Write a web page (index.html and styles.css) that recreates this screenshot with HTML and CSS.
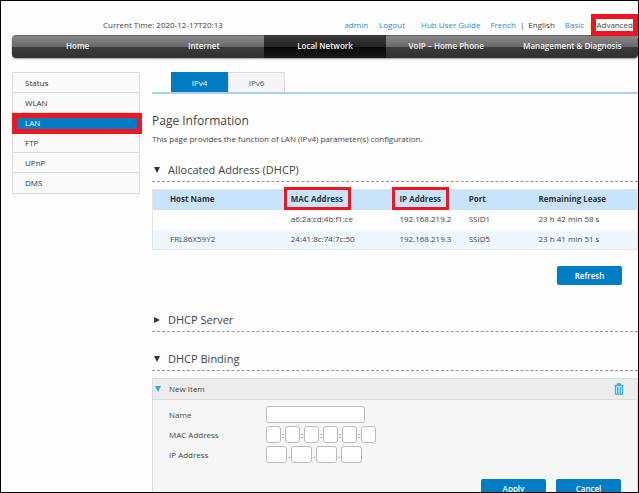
FILE: index.html
```html
<!DOCTYPE html>
<html lang="en">
<head>
    <meta charset="UTF-8">
    <title>Local Network - LAN</title>
    <link rel="stylesheet" href="styles.css">
</head>
<body>

    <header class="topbar">
        <span class="time">Current Time: 2020-12-17T20:13</span>
        <div class="links">
            <a href="#">admin</a>
            <a href="#" class="logout">Logout</a>
            <a href="#" class="guide">Hub User Guide</a>
            <span class="lang"><a href="#">French</a><i>|</i><span>English</span></span>
            <span class="mode"><a href="#">Basic</a><i>|</i></span>
            <span class="advanced marked">Advanced</span>
        </div>
    </header>

    <nav class="main-nav">
        <a href="#">Home</a>
        <a href="#">Internet</a>
        <a href="#" class="active">Local Network</a>
        <a href="#">VoIP – Home Phone</a>
        <a href="#">Management &amp; Diagnosis</a>
    </nav>

    <div class="content">
        <nav class="side-nav">
            <a href="#">Status</a>
            <a href="#">WLAN</a>
            <a href="#" class="active marked">LAN</a>
            <a href="#">FTP</a>
            <a href="#">UPnP</a>
            <a href="#">DMS</a>
        </nav>

        <main>
            <div class="tabs">
                <button type="button" class="active">IPv4</button>
                <button type="button">IPv6</button>
            </div>

            <h1>Page Information</h1>
            <p class="intro">This page provides the function of LAN (IPv4) parameter(s) configuration.</p>

            <section class="allocated">
                <h2><svg class="arrow" viewBox="0 0 6 6"><path d="M0 0h6L3 6z"/></svg>Allocated Address (DHCP)</h2>
                <table>
                    <thead>
                        <tr>
                            <th class="host">Host Name</th>
                            <th class="mac"><span class="marked">MAC Address</span></th>
                            <th class="ip"><span class="marked">IP Address</span></th>
                            <th class="port">Port</th>
                            <th>Remaining Lease</th>
                        </tr>
                    </thead>
                    <tbody>
                        <tr>
                            <td></td>
                            <td>a6:2a:cd:4b:f1:ce</td>
                            <td>192.168.219.2</td>
                            <td>SSID1</td>
                            <td>23 h 42 min 58 s</td>
                        </tr>
                        <tr>
                            <td>FRL86X59Y2</td>
                            <td>24:41:8c:74:7c:50</td>
                            <td>192.168.219.3</td>
                            <td>SSID5</td>
                            <td>23 h 41 min 51 s</td>
                        </tr>
                    </tbody>
                </table>
                <div class="buttons">
                    <button type="button" class="btn">Refresh</button>
                </div>
            </section>

            <section class="server">
                <h2><svg class="arrow" viewBox="0 0 6 6"><path d="M0 0v6l6-3z"/></svg>DHCP Server</h2>
            </section>

            <section>
                <h2><svg class="arrow" viewBox="0 0 6 6"><path d="M0 0h6L3 6z"/></svg>DHCP Binding</h2>
                <form class="panel">
                    <div class="panel-head">
                        <svg class="arrow" viewBox="0 0 6 6"><path d="M0 0h6L3 6z"/></svg>
                        <span>New Item</span>
                        <button type="button" class="trash" aria-label="Delete">
                            <svg viewBox="0 0 10 12"><path d="M3.5 2V1h3v1M.5 2.500h9M1.500 3v8h7V3M3.700 4v6M6.300 4v6"/></svg>
                        </button>
                    </div>
                    <div class="fields">
                        <div class="field">
                            <label for="name">Name</label>
                            <input type="text" id="name" class="name">
                        </div>
                        <div class="field octets mac-field">
                            <label for="mac1">MAC Address</label>
                            <input type="text" id="mac1"><i>:</i>
                            <input type="text" aria-label="MAC part 2"><i>:</i>
                            <input type="text" aria-label="MAC part 3"><i>:</i>
                            <input type="text" aria-label="MAC part 4"><i>:</i>
                            <input type="text" aria-label="MAC part 5"><i>:</i>
                            <input type="text" aria-label="MAC part 6">
                        </div>
                        <div class="field octets ip-field">
                            <label for="ip1">IP Address</label>
                            <input type="text" id="ip1"><i>.</i>
                            <input type="text" aria-label="IP part 2"><i>.</i>
                            <input type="text" aria-label="IP part 3"><i>.</i>
                            <input type="text" aria-label="IP part 4">
                        </div>
                    </div>
                    <div class="buttons">
                        <button type="submit" class="btn">Apply</button>
                        <button type="reset" class="btn">Cancel</button>
                    </div>
                </form>
            </section>
        </main>
    </div>

</body>
</html>
```
FILE: styles.css
```css
* { box-sizing: border-box; }
html { height: 100%; }
body { height: 100%; margin: 0; padding-left: 11px; border: 1px solid #000; overflow: hidden; background-color: #fdfdfd; color: #444; font-family: "Open Sans", "Noto Sans", sans-serif; font-size: 8px; line-height: 12px; }
a { color: #2a8cc4; text-decoration: none; }
i { font-style: normal; }
button, input { font: inherit; margin: 0; padding: 0; }
button { cursor: pointer; border: none; }

.topbar { display: flex; justify-content: space-between; align-items: center; height: 34px; padding: 14px 5px 0 91px; white-space: nowrap; }
.links { display: flex; }
.logout { margin-left: 11px; }
.guide { margin-left: 16px; }
.lang, .mode { margin-left: 10px; }
.lang i { margin: 0 4px; }
.mode i { margin: 0 3px 0 5px; color: #a33; }

/* red highlight frames */
.marked { position: relative; }
.marked::after { content: ""; position: absolute; border: 5px solid #ee1620; }
.advanced::after { inset: -5px -5px; z-index: 1; }

.main-nav { display: flex; height: 23px; border-radius: 4px; overflow: hidden; background: linear-gradient(#606060, #858585 8%, #6a6a6a 50%, #3a3d3c 52%, #2e3030); box-shadow: 0 1px 2px #999; }
.main-nav a { flex: 12; color: #f2f2f2; font-weight: 600; line-height: 22px; text-align: center; white-space: nowrap; }
.main-nav a:first-child, .main-nav a:last-child { flex: 13; }
.main-nav .active { background: linear-gradient(#3b3b3b, #242424 50%, #080808 52%, #181818); }

.content { display: flex; gap: 12px; padding-top: 14px; }
.side-nav { flex: none; width: 128px; align-self: flex-start; border: 1px solid #ddd; background-color: #fafafa; }
.side-nav a { display: block; height: 20px; padding-left: 12px; border-bottom: 1px solid #ddd; color: #333; line-height: 19px; }
.side-nav a:last-child { border-bottom: none; }
.side-nav .active { background-color: #007dc5; color: #fff; }
.side-nav .marked::after { inset: 0 -3px -2px -1px; }

main { flex: 1; min-width: 0; }
.tabs { display: flex; padding-left: 19px; border-bottom: 2px solid #a9d1ea; }
.tabs button { width: 57px; height: 20px; border: 1px solid #ddd; border-bottom: none; background-color: #f5f5f5; color: #555; }
.tabs .active { border-color: #007dc5; background-color: #007dc5; color: #fff; }

h1, h2 { margin: 0; color: #444; font-weight: normal; }
h1 { margin-top: 18px; font-size: 12px; line-height: 18px; }
.intro { margin: 3px 0 15px; }
h2 { display: flex; align-items: center; height: 22px; margin-bottom: 7px; padding: 0 0 2px 2px; border-bottom: 1px dashed #999; font-size: 11px; line-height: 16px; }
.arrow { flex: none; width: 6px; height: 6px; fill: #333; }
h2 .arrow { margin-right: 8px; }
.allocated { margin-bottom: 25px; }
.server { margin-bottom: 17px; }

table { width: 100%; table-layout: fixed; border-collapse: collapse; border: 1px solid #e4e4e4; }
th, td { height: 20px; padding: 0 0 1px 17px; text-align: left; white-space: nowrap; }
th { background-color: #c8e4fd; color: #333; font-weight: bold; }
.host { width: 25%; }
.mac { width: 22.4%; }
.ip { width: 14.3%; }
.port { width: 14.4%; }
tbody tr:nth-child(even) { background-color: #eef7fe; }
th .marked::after { inset: -6px -8px -6px -7px; border-width: 3px; }

.buttons { display: flex; justify-content: flex-end; gap: 10px; padding: 16px 16px 0 0; }
.btn { width: 65px; height: 19px; border-radius: 2px; background-color: #007dc5; color: #fff; font-weight: 600; }

.panel { min-height: 150px; border: 1px solid #ddd; background-color: #f6f6f6; }
.panel-head { display: flex; align-items: center; height: 21px; padding: 0 13px 0 2px; border-bottom: 1px solid #ddd; background-color: #ececec; }
.panel-head .arrow { margin-right: 8px; fill: #24aee8; }
.trash { width: 10px; height: 12px; margin-left: auto; background: none; }
.trash svg { display: block; width: 10px; height: 12px; fill: none; stroke: #35b4e4; stroke-width: 1.4; }
.fields { display: flex; flex-direction: column; gap: 3px; padding: 6px 0 0 16px; }
.field { display: flex; align-items: center; }
.field label { width: 97px; }
.field input { height: 17px; border: 1px solid #bbb; border-radius: 3px; background-color: #fff; }
.field .name { width: 99px; }
.octets i { width: 4px; text-align: center; }
.mac-field input { width: 15px; }
.ip-field input { width: 21px; }
```
